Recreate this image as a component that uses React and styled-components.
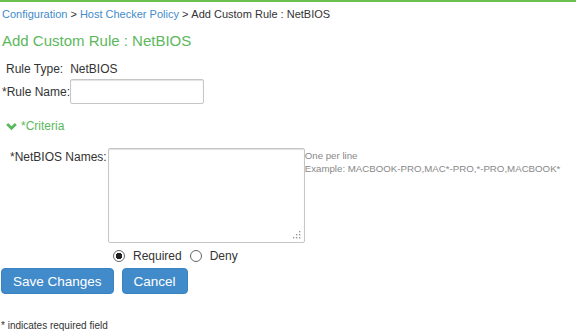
import React from 'react';
import styled, { createGlobalStyle } from 'styled-components';

const Global = createGlobalStyle`
  body {
    margin: 0;
    background: #fff;
    font-family: "Liberation Sans", Arial, sans-serif;
    color: #333;
  }
`

export default function App() {
  return (
    <Page>
      <Global />
      <Crumbs>
        <CrumbLink>Configuration</CrumbLink>
        <Sep>&gt;</Sep>
        <CrumbLink>Host Checker Policy</CrumbLink>
        <Sep>&gt;</Sep>
        <span>Add Custom Rule : NetBIOS</span>
      </Crumbs>
      <Title>Add Custom Rule : NetBIOS</Title>
      <TypeRow>
        <span>Rule Type:</span>
        <span>NetBIOS</span>
      </TypeRow>
      <NameRow>
        <Label>*Rule Name:</Label>
        <TextInput type="text" />
      </NameRow>
      <Section>
        <svg width="11" height="9" viewBox="0 0 11 9">
          <path d="M1.2 2 L5.5 6.3 L9.8 2" fill="none" stroke="#5cb85c" strokeWidth="2.8" />
        </svg>
        <span>*Criteria</span>
      </Section>
      <NamesRow>
        <NamesLabel>*NetBIOS Names:</NamesLabel>
        <AreaBox>
          <Area />
          <Grip width="8" height="8" viewBox="0 0 8 8">
            <g fill="#999">
              <rect x="6" y="0" width="1.4" height="1.4" />
              <rect x="3" y="3" width="1.4" height="1.4" />
              <rect x="6" y="3" width="1.4" height="1.4" />
              <rect x="0" y="6" width="1.4" height="1.4" />
              <rect x="3" y="6" width="1.4" height="1.4" />
              <rect x="6" y="6" width="1.4" height="1.4" />
            </g>
          </Grip>
        </AreaBox>
        <Hint>
          <div>One per line</div>
          <div>Example: MACBOOK-PRO,MAC*-PRO,*-PRO,MACBOOK*</div>
        </Hint>
      </NamesRow>
      <Radios>
        <Radio type="radio" name="r" defaultChecked />
        <RadioText>Required</RadioText>
        <Radio type="radio" name="r" />
        <RadioText>Deny</RadioText>
      </Radios>
      <Buttons>
        <Button>Save Changes</Button>
        <Button>Cancel</Button>
      </Buttons>
      <Footnote>* indicates required field</Footnote>
    </Page>
  );
}

const Page = styled.div`
  width: 576px;
  height: 334px;
  box-sizing: border-box;
  border-top: 2px solid #6cbf4e;
  overflow: hidden;
  font-size: 12px;
`
const Crumbs = styled.div`
  padding: 6px 0 0 2px;
  height: 13px;
  line-height: 13px;
  font-size: 11px;
  color: #333;
`
const CrumbLink = styled.span`
  color: #428bca;
`
const Sep = styled.span`
  margin: 0 3px;
`
const Title = styled.h1`
  margin: 11px 0 0 2px;
  font-size: 15px;
  font-weight: normal;
  line-height: 18px;
  color: #5cb85c;
`
const TypeRow = styled.div`
  display: flex;
  gap: 7px;
  margin: 12px 0 0 6px;
  line-height: 14px;
`
const NameRow = styled.div`
  display: flex;
  align-items: center;
  margin: 3px 0 0 2px;
`
const Label = styled.span`
  line-height: 14px;
`
const TextInput = styled.input`
  box-sizing: border-box;
  width: 134px;
  height: 25px;
  margin: 0;
  border: 1px solid #c6c6c6;
  border-radius: 2px;
  box-shadow: inset 0 1px 1px rgba(0,0,0,0.12);
  outline: none;
`
const Section = styled.div`
  display: flex;
  align-items: center;
  gap: 4px;
  margin: 15px 0 0 6px;
  color: #5cb85c;
  line-height: 14px;
`
const NamesRow = styled.div`
  display: flex;
  align-items: flex-start;
  margin: 15px 0 0 10px;
`
const NamesLabel = styled.span`
  line-height: 14px;
  margin: 2px 1px 0 0;
`
const AreaBox = styled.div`
  position: relative;
  width: 197px;
  height: 95px;
`
const Area = styled.textarea`
  display: block;
  box-sizing: border-box;
  width: 197px;
  height: 95px;
  margin: 0;
  resize: none;
  border: 1px solid #c6c6c6;
  border-radius: 2px;
  box-shadow: inset 0 1px 1px rgba(0,0,0,0.12);
  outline: none;
`
const Grip = styled.svg`
  position: absolute;
  right: 4px;
  bottom: 4px;
`
const Hint = styled.div`
  font-size: 9.7px;
  line-height: 13px;
  color: #888;
  padding-top: 1px;
`
const Radios = styled.div`
  display: flex;
  align-items: center;
  margin: 6px 0 0 113px;
  height: 14px;
`
const Radio = styled.input`
  appearance: none;
  box-sizing: border-box;
  width: 12px;
  height: 12px;
  margin: 0 8px 0 0;
  border: 1px solid #666;
  border-radius: 50%;
  background: #fff;
  &:checked {
    background: radial-gradient(circle, #222 0 3px, #fff 3.5px);
  }
`
const RadioText = styled.span`
  margin-right: 8px;
  line-height: 14px;
`
const Buttons = styled.div`
  display: flex;
  gap: 8px;
  margin: 5px 0 0 1px;
`
const Button = styled.button`
  height: 26px;
  padding: 0 11px;
  background: #428bca;
  border: 1px solid #3a82c0;
  border-radius: 4px;
  color: #fff;
  font-family: "Liberation Sans", Arial, sans-serif;
  font-size: 13.5px;
`
const Footnote = styled.div`
  margin: 26px 0 0 1px;
  font-size: 10px;
  line-height: 12px;
`
